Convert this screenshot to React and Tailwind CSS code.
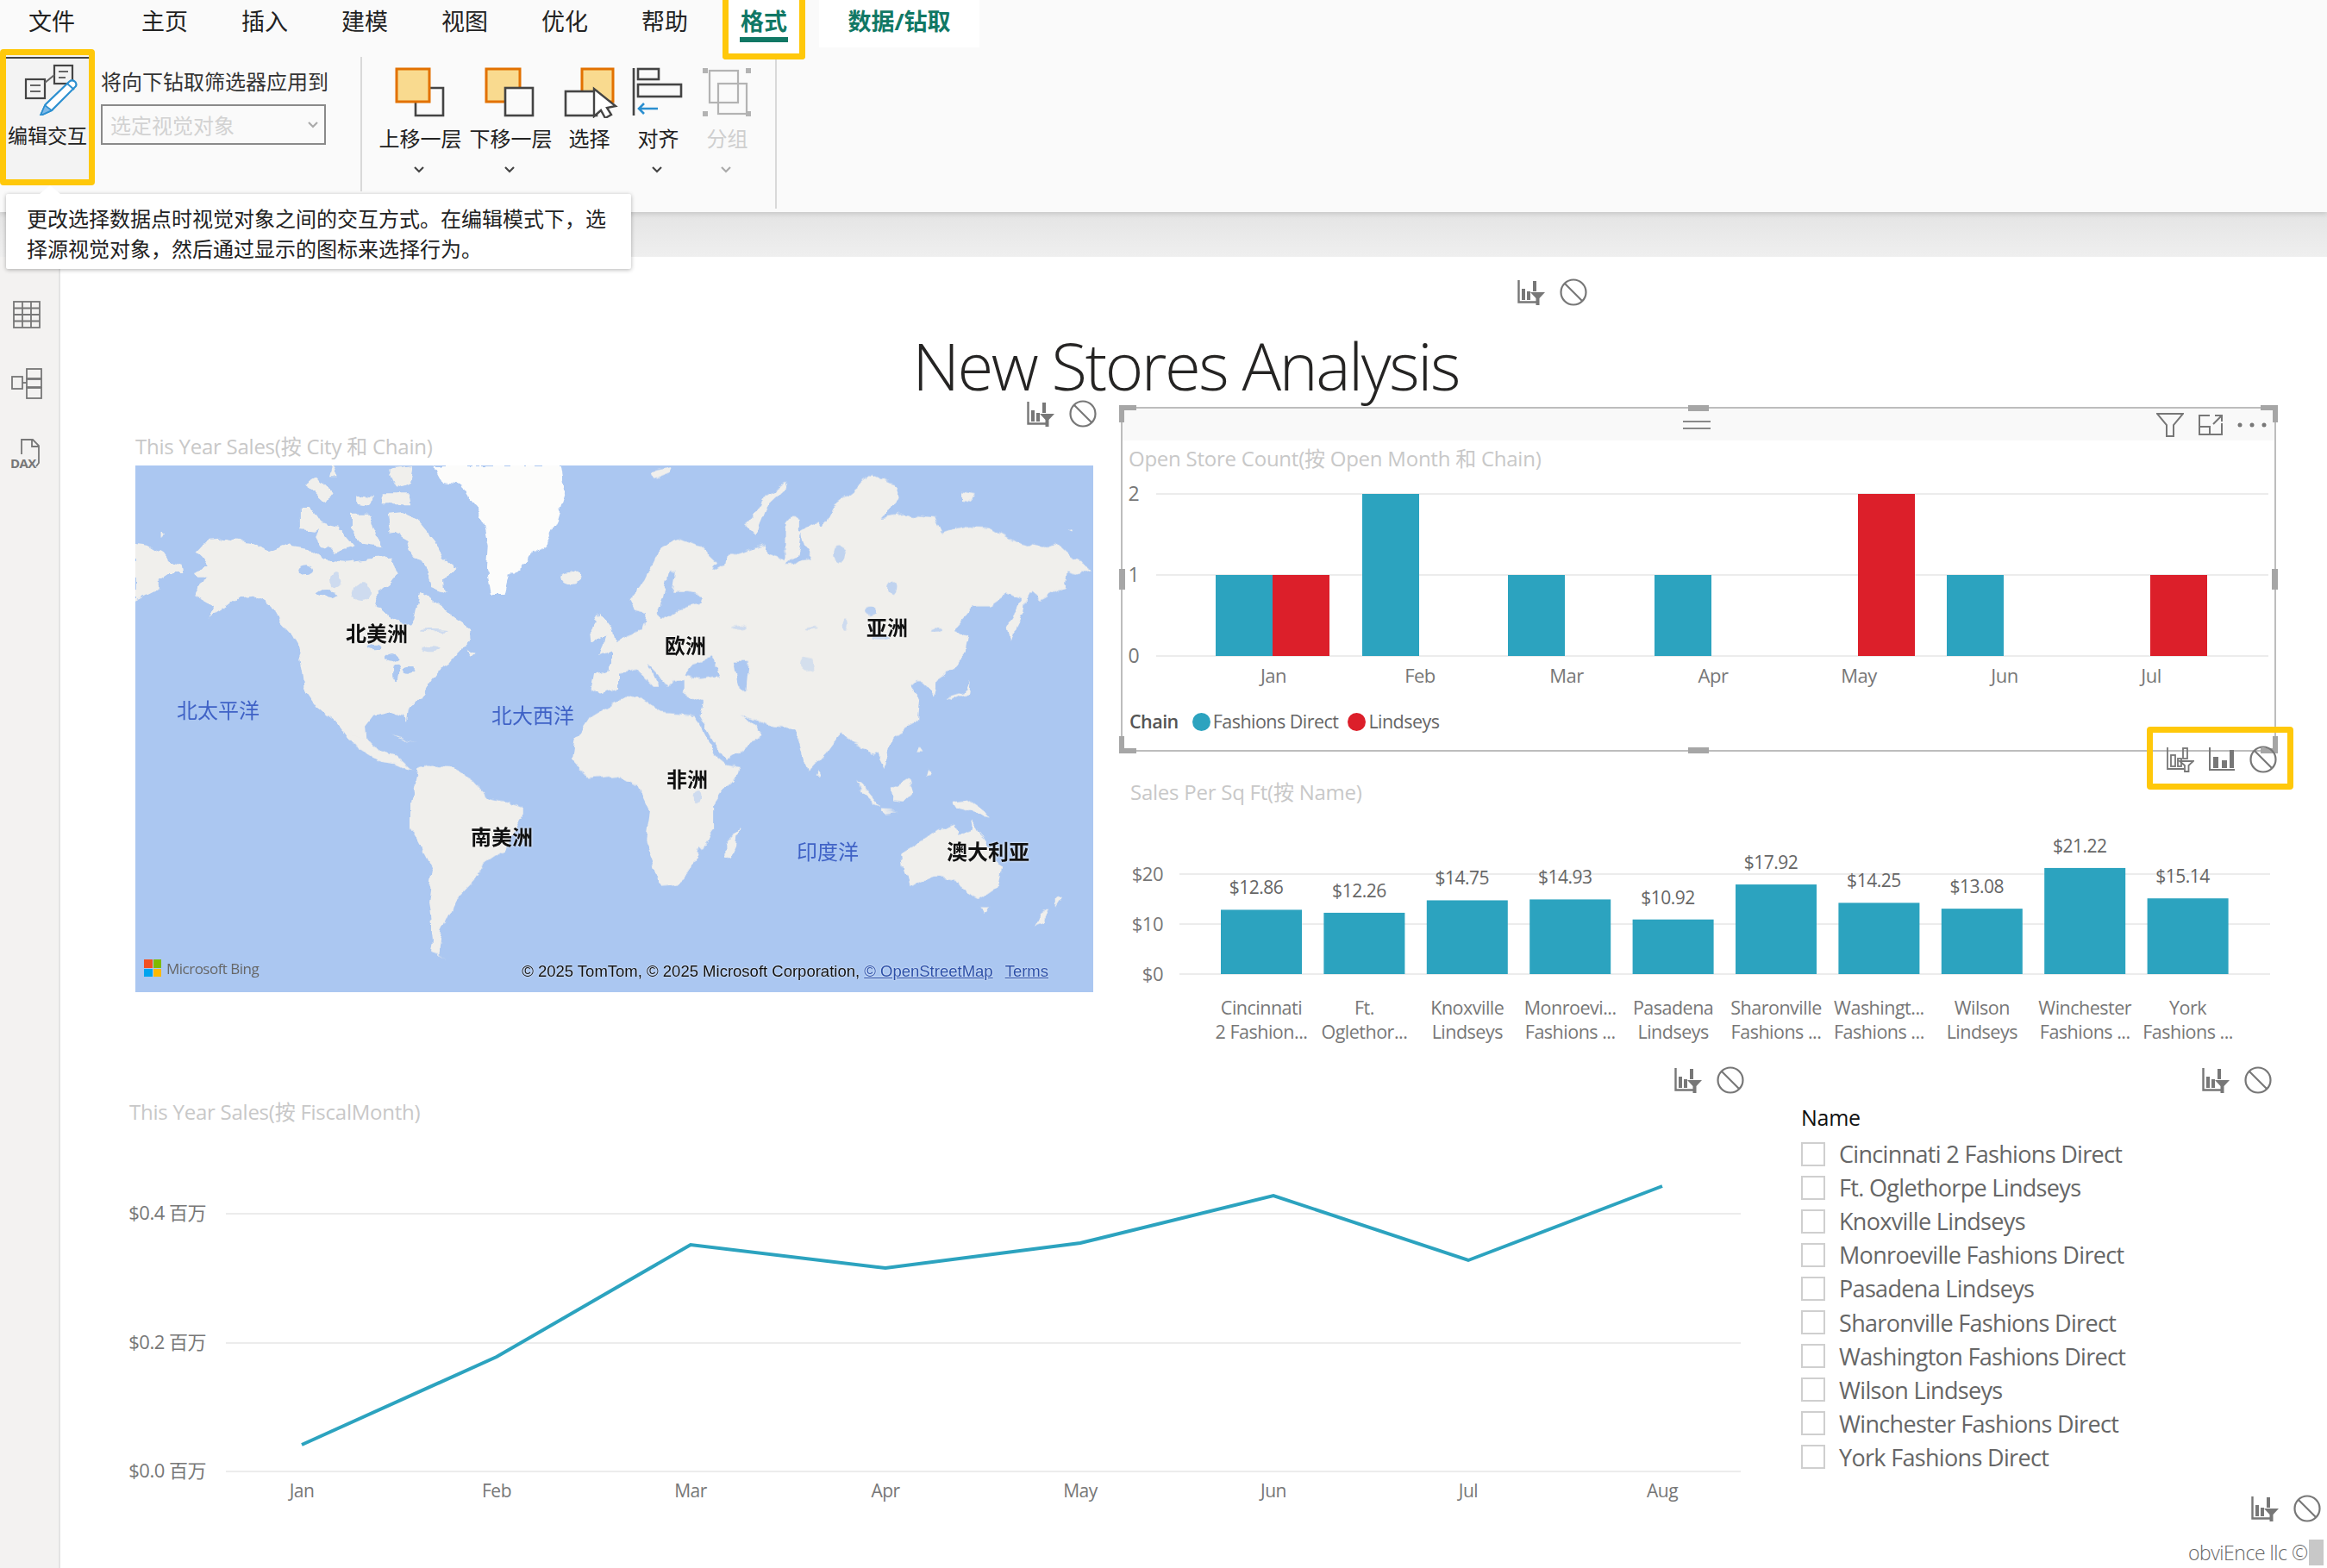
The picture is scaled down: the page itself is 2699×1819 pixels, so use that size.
import React from "react";

const Chart = ({ cls = "" }) => (
  <svg width="32" height="30" viewBox="0 0 32 30" className={cls}>
    <path d="M1.5 1V26.5H24" fill="none" stroke="#777" strokeWidth="2.4" />
    <rect x="5" y="11" width="4" height="13" fill="#777" />
    <rect x="11" y="14" width="4" height="10" fill="#777" />
    <rect x="18" y="2" width="4" height="12" fill="#777" />
    <path d="M15 15H32L25.5 22V30H21.5V22Z" fill="#777" />
  </svg>
);
const Ban = () => (
  <svg width="32" height="32" viewBox="0 0 32 32">
    <circle cx="16" cy="16" r="14.5" fill="none" stroke="#777" strokeWidth="2.2" />
    <path d="M6 6L26 26" stroke="#777" strokeWidth="2.2" />
  </svg>
);
const Pair = () => (
  <div className="flex h-[32px] items-center gap-[17px]">
    <Chart />
    <Ban />
  </div>
);

const Tab = ({ children }) => (
  <div className="flex h-[50px] w-[116px] items-center justify-center text-[27px] text-[#222]">{children}</div>
);

const Chev = ({ c = "#444" }) => (
  <svg width="14" height="10" viewBox="0 0 14 10">
    <path d="M2 2L7 7L12 2" fill="none" stroke={c} strokeWidth="2.2" />
  </svg>
);

const RibbonBtn = ({ w, label, vb, chev = true, dim, children }) => (
  <div className={`flex ${w} flex-col items-center pt-[20px]`}>
    <svg className="w-full" height="60" viewBox={vb}>{children}</svg>
    <div className={`mt-[9px] h-[30px] whitespace-nowrap text-[24px] leading-[30px] ${dim ? "text-[#cfcfcf]" : "text-[#222]"}`}>{label}</div>
    <div className="mr-[4px] mt-[16px] flex h-[10px] items-center">{chev && <Chev c={dim ? "#aaa" : "#444"} />}</div>
  </div>
);

const MapLabel = ({ x, y, sea, children }) => (
  <div
    style={{ left: x, top: y }}
    className={`absolute -translate-x-1/2 -translate-y-1/2 whitespace-nowrap text-[24px] leading-none ${
      sea ? "text-[#3f62c6]" : "font-bold text-[#111] [text-shadow:0_0_3px_#fff]"
    }`}
  >
    {children}
  </div>
);

const LAND = "#f0efec";
const SEA = "#abc7f1";

/* coordinates of the three map regions, each in its own local grid */
const north = [
  "0,270 40,275 95,310 115,340 150,350 155,375 110,375 75,400 75,430 0,470",
  "200,300 235,260 300,255 370,270 440,300 500,275 560,285 610,325 680,335 760,325 830,320 850,380 830,410 790,440 780,490 830,530 890,560 905,540 915,490 925,440 965,470 1040,530 1090,570 1090,610 1060,640 1020,690 980,715 950,760 930,800 890,850 885,890 870,870 830,855 770,870 745,905 750,965 700,965 650,890 590,840 545,770 530,680 540,650 510,590 450,520 440,490 380,455 335,460 300,490 240,530 255,490 190,450 205,420 240,395 200,395 185,370 240,350 220,320",
  "540,150 580,150 610,200 575,230 540,225",
  "600,200 660,215 710,280 650,300 600,280 580,240",
  "820,170 870,165 925,200 975,265 1000,320 1040,350 1005,400 1010,440 960,420 945,370 900,300 880,260 830,230",
  "700,170 760,170 780,240 800,280 740,270 700,220",
  "830,10 900,0 890,60 850,80 830,40",
  "800,100 890,100 895,130 800,130",
  "550,70 590,40 640,100 620,130 580,90",
  "640,0 660,40 630,40",
  "720,100 770,110 760,140 720,135",
  "1080,640 1105,650 1090,665",
  "1510,510 1545,560 1560,640 1510,660 1530,590 1480,620 1475,570",
  "1490,725 1568,705 1568,780 1510,800 1480,780",
  "80,225 100,235 80,245",
];
const greenland = "970,0 1380,0 1395,100 1370,190 1330,280 1270,330 1215,380 1200,450 1160,450 1145,360 1150,280 1135,200 1100,140 1060,70 1000,60";
const northLakes = [
  [555, 365, 28, 16, 1], [620, 445, 30, 13, 1], [650, 400, 20, 24, 0.5], [735, 440, 30, 25, 0.5],
  [830, 670, 22, 16, 1], [850, 720, 10, 28, 1], [890, 710, 20, 12, 1], [780, 630, 25, 10, 1], [970, 575, 45, 5, 0.5], [960, 640, 30, 9, 0.5],
];

const eurasia =
  "0,640 40,600 100,570 115,510 75,500 60,470 110,400 160,290 220,255 290,285 345,340 330,370 370,345 375,310 400,310 430,300 500,270 510,310 570,330 570,200 590,175 610,190 610,230 680,190 690,210 730,130 850,30 870,40 935,70 930,120 880,180 950,170 1050,180 1075,235 1170,210 1230,215 1320,270 1400,290 1450,270 1500,320 1560,360 1510,380 1480,370 1475,425 1400,470 1365,440 1350,470 1290,445 1230,490 1180,490 1130,550 1120,570 1160,590 1150,650 1100,720 1060,750 1050,810 1040,790 1000,750 980,770 1005,820 1000,880 988,900 913,950 905,980 892,1050 870,1000 851,1010 830,985 789,970 748,930 700,1000 638,1070 611,960 597,915 501,905 430,870 490,930 494,945 378,1025 330,950 290,870 300,820 240,790 240,750 195,755 190,770 165,740 130,700 115,685 165,770 140,770 85,710 0,730";
const eastLand = [
  "440,210 500,110 570,60 575,75 510,140 470,245",
  "130,20 200,5 190,30 140,50",
  "1290,560 1320,510 1355,430 1345,510 1300,610",
  "1090,810 1150,790 1170,750 1165,790 1110,815",
  "1140,90 1190,100 1170,125 1140,120",
  "1480,235 1500,230 1495,240",
];
const eastSea = [
  "245,730 270,690 330,670 355,735 290,745",
  "400,680 450,680 440,790 415,770",
  "190,370 215,370 205,440 260,440 300,450 290,480 220,500 170,540 150,520 170,470",
  "615,230 630,290 655,325 620,330 600,345 575,345 600,320 610,280",
];
const eastLakes = [
  [915, 425, 13, 28, 0.7], [745, 310, 22, 30, 0.7], [840, 505, 25, 14, 0.8], [880, 600, 28, 10, 0.7],
  [640, 690, 24, 26, 0.4], [420, 560, 22, 8, 0.5], [1060, 570, 18, 8, 0.7], [765, 555, 10, 20, 0.5], [650, 565, 24, 4, 0.5],
];

const south = [
  "341,60 380,-30 443,-85 490,-100 548,-40 625,-30 675,110 700,140 735,150 690,235 670,280 670,370 640,430 620,510 580,555 545,560 525,480 505,400 515,300 490,220 440,180 375,190 335,125",
  "730,365 725,420 710,470 695,460 695,420",
  "0,145 50,150 100,195 140,260 220,290 220,320 170,440 130,480 105,540 60,610 25,720 15,800 35,820 0,790 4,750 -6,618 4,504 -47,360 -47,276 -30,162",
  "1005,195 1030,230 1065,290 1050,280 1020,240",
  "1065,295 1105,300 1070,305",
  "1090,225 1130,190 1140,240 1120,270 1095,265",
  "1175,165 1185,185 1170,190",
  "1155,80 1165,100 1150,100",
  "1240,265 1270,260 1310,300 1325,325 1280,310 1250,290",
  "1115,450 1170,400 1200,370 1240,350 1250,385 1280,370 1285,340 1310,410 1350,500 1340,570 1300,610 1270,590 1245,540 1200,530 1130,570 1120,510",
  "1295,640 1320,640 1310,665",
  "1480,600 1495,600 1480,635",
  "1465,645 1450,690 1430,700 1440,670",
  "915,165 920,185 908,185",
];

const storeBars = [
  [1410, 667, "#2ca3bf"], [1476, 667, "#dc1f2a"], [1580, 573, "#2ca3bf"], [1749, 667, "#2ca3bf"],
  [1919, 667, "#2ca3bf"], [2155, 573, "#dc1f2a"], [2258, 667, "#2ca3bf"], [2494, 667, "#dc1f2a"],
];
const storeMonths = [["Jan", 1477], ["Feb", 1647], ["Mar", 1817], ["Apr", 1987], ["May", 2156], ["Jun", 2325], ["Jul", 2495]];

const sales = [
  [12.86, "Cincinnati", "2 Fashion..."], [12.26, "Ft.", "Oglethor..."], [14.75, "Knoxville", "Lindseys"],
  [14.93, "Monroevi...", "Fashions ..."], [10.92, "Pasadena", "Lindseys"], [17.92, "Sharonville", "Fashions ..."],
  [14.25, "Washingt...", "Fashions ..."], [13.08, "Wilson", "Lindseys"], [21.22, "Winchester", "Fashions ..."],
  [15.14, "York", "Fashions ..."],
];

const linePts = "350,1674 576,1572 801,1442 1027,1469 1253,1440 1477,1385 1703,1460 1928,1374";
const lineMonths = [["Jan", 350], ["Feb", 576], ["Mar", 801], ["Apr", 1027], ["May", 1253], ["Jun", 1477], ["Jul", 1703], ["Aug", 1928]];
const names = [
  "Cincinnati 2 Fashions Direct", "Ft. Oglethorpe Lindseys", "Knoxville Lindseys", "Monroeville Fashions Direct",
  "Pasadena Lindseys", "Sharonville Fashions Direct", "Washington Fashions Direct", "Wilson Lindseys",
  "Winchester Fashions Direct", "York Fashions Direct",
];

const Handle = ({ cls }) => <div className={`absolute bg-[#a6a6a6] ${cls}`} />;

export default function App() {
  return (
    <div className="relative flex h-[1819px] w-[2699px] flex-col overflow-hidden bg-white [font-family:'Open_Sans','Noto_Sans_CJK_SC',sans-serif]">
      {/* tabs */}
      <div className="relative z-20 flex h-[57px] bg-[#fafafa] pl-[33px]">
        <div className="flex h-[50px] w-[100px] items-center text-[27px] text-[#222]">文件</div>
        <Tab>主页</Tab>
        <Tab>插入</Tab>
        <Tab>建模</Tab>
        <Tab>视图</Tab>
        <Tab>优化</Tab>
        <Tab>帮助</Tab>
        <div className="ml-[9px] box-border flex h-[69px] w-[96px] shrink-0 flex-col items-center rounded-b-[4px] border-[7px] border-t-0 border-[#ffc80a] bg-white pt-[7px]">
          <div className="flex h-[36px] items-center text-[27px] font-bold text-[#117865]">格式</div>
          <div className="h-[6px] w-[56px] bg-[#117865]" />
        </div>
        <div className="ml-[16px] flex h-[55px] w-[186px] items-center justify-center bg-white pb-[5px] text-[27px] font-bold text-[#117865]">数据/钻取</div>
      </div>

      {/* ribbon */}
      <div className="relative z-10 flex h-[189px] shrink-0 items-start bg-[#fafafa] shadow-[0_2px_6px_rgba(0,0,0,0.14)]">
        <div className="box-border flex h-[158px] w-[110px] shrink-0 flex-col items-center rounded-[4px] border-[7px] border-[#ffc80a] bg-[#f3f3f3]">
          <div className="mt-[2px] h-[2px] w-full bg-[#444]" />
          <svg width="96" height="66" viewBox="7 67 96 66">
            <rect x="30" y="91" width="22" height="22" fill="#f3f3f3" stroke="#444" strokeWidth="2.2" />
            <rect x="63" y="75" width="21" height="21" fill="#f3f3f3" stroke="#444" strokeWidth="2.2" />
            <path d="M52 95L63 86M35 98H47M35 105H47M68 82H79M68 89H76" stroke="#666" strokeWidth="2" fill="none" />
            <path d="M47 133L53 120L80 94C84 90 90 94 88 99L60 127Z" fill="#fff" stroke="#2b8fd0" strokeWidth="2.2" />
            <path d="M47 133L52 121L60 127Z" fill="#7db9e8" stroke="#2b8fd0" strokeWidth="1.6" />
            <path d="M78 96L86 103" stroke="#2b8fd0" strokeWidth="2" />
          </svg>
          <div className="mt-[8px] whitespace-nowrap text-[23px] leading-[30px] text-[#222]">编辑交互</div>
        </div>

        <div className="ml-[7px] flex w-[261px] shrink-0 flex-col pt-[23px]">
          <div className="h-[30px] whitespace-nowrap text-[24px] leading-[30px] text-[#333]">将向下钻取筛选器应用到</div>
          <div className="mt-[11px] box-border flex h-[47px] items-center justify-between border-2 border-[#8a8a8a] pl-[9px] pr-[6px]">
            <span className="pt-[2px] text-[24px] text-[#d2d2d2]">选定视觉对象</span>
            <Chev c="#aaa" />
          </div>
        </div>

        <div className="ml-[40px] mt-[9px] h-[156px] w-[2px] shrink-0 bg-[#d9d9d9]" />

        <div className="ml-[15px] flex">
          <RibbonBtn w="w-[105px]" label="上移一层" vb="435 77 105 60">
            <path d="M499 102H514V134H482V119" fill="none" stroke="#444" strokeWidth="2.6" />
            <rect x="460" y="80" width="38" height="38" fill="#f9da8f" stroke="#e27100" strokeWidth="3" />
          </RibbonBtn>
          <RibbonBtn w="w-[105px]" label="下移一层" vb="540 77 105 60">
            <rect x="564" y="80" width="39" height="38" fill="#f9da8f" stroke="#e27100" strokeWidth="3" />
            <rect x="586" y="102" width="32" height="32" fill="#fafafa" stroke="#444" strokeWidth="2.6" />
          </RibbonBtn>
          <RibbonBtn w="w-[77px]" label="选择" chev={false} vb="645 77 77 60">
            <rect x="675" y="80" width="36" height="38" fill="#f9da8f" stroke="#e27100" strokeWidth="3" />
            <rect x="656" y="106" width="36" height="28" fill="#fafafa" stroke="#444" strokeWidth="2.6" />
            <path d="M689 103V135L697 128L702 137L709 133L704 125L714 123Z" fill="#fff" stroke="#444" strokeWidth="2.4" />
          </RibbonBtn>
          <RibbonBtn w="w-[83px]" label="对齐" vb="722 77 83 60">
            <path d="M735 79V134" stroke="#444" strokeWidth="2.6" />
            <rect x="740" y="80" width="24" height="12" fill="none" stroke="#444" strokeWidth="2.6" />
            <rect x="740" y="98" width="50" height="14" fill="none" stroke="#444" strokeWidth="2.6" />
            <path d="M763 126H741M747 120L741 126L747 132" fill="none" stroke="#2b8fd0" strokeWidth="2.6" />
          </RibbonBtn>
          <RibbonBtn w="w-[77px]" label="分组" dim vb="805 77 77 60">
            <rect x="823" y="82" width="33" height="37" fill="none" stroke="#b3b3b3" strokeWidth="2.2" />
            <rect x="833" y="97" width="33" height="35" fill="none" stroke="#b3b3b3" strokeWidth="2.2" />
            <path d="M815 79h6v6h-6zM865 79h6v6h-6zM815 129h6v6h-6zM865 129h6v6h-6z" fill="#b3b3b3" />
          </RibbonBtn>
        </div>

        <div className="ml-[17px] mt-[9px] h-[176px] w-[2px] shrink-0 bg-[#d9d9d9]" />
      </div>

      {/* grey band */}
      <div className="h-[52px] shrink-0 bg-gradient-to-b from-[#e4e4e4] to-[#efefef]" />

      {/* tooltip */}
      <div className="absolute left-[7px] top-[225px] z-30 box-border h-[87px] w-[725px] rounded-[2px] bg-white px-[24px] py-[11px] text-[24px] leading-[35px] text-[#222] shadow-[0_1px_5px_rgba(0,0,0,0.3)]">
        <div className="absolute left-[39px] top-[-10px] h-0 w-0 border-x-[12px] border-b-[10px] border-x-transparent border-b-white" />
        {"更改选择数据点时视觉对象之间的交互方式。在编辑模式下\uFF0C选择源视觉对象\uFF0C然后通过显示的图标来选择行为。"}
      </div>

      {/* body */}
      <div className="flex min-h-0 flex-1">
        <aside className="box-border flex w-[70px] shrink-0 flex-col items-center gap-[46px] border-r-2 border-[#e4e4e4] bg-[#f3f2f1] pr-[6px] pt-[51px]">
          <svg width="32" height="32" viewBox="0 0 32 32" fill="none" stroke="#777" strokeWidth="1.8">
            <rect x="1" y="1" width="30" height="30" />
            <path d="M1 8.5H31M1 16H31M1 23.5H31M11 1V31M21 1V31" />
          </svg>
          <svg width="36" height="36" viewBox="0 0 36 36" fill="none" stroke="#777" strokeWidth="1.8">
            <rect x="1" y="10" width="12" height="14" />
            <rect x="18" y="1" width="17" height="11" />
            <rect x="18" y="13" width="17" height="9" />
            <rect x="18" y="23" width="17" height="12" />
            <path d="M13 17H18" />
          </svg>
          <div className="relative h-[36px] w-[36px]">
            <svg width="36" height="36" viewBox="0 0 36 36" fill="none" stroke="#777" strokeWidth="1.8">
              <path d="M12 18V1H25L32 8V28L29 32M24 1V9H32" />
            </svg>
            <span className="absolute bottom-[0px] left-[-1px] text-[15px] font-bold leading-none tracking-[-0.04em] text-[#777]">DAX</span>
          </div>
        </aside>

        <main className="flex min-w-0 flex-1 flex-col">
          {/* title */}
          <div className="h-[166px] shrink-0">
            <div className="pl-[1690px] pt-[25px]"><Pair /></div>
            <div className="mt-[29px] pr-[19px] text-center text-[76px] font-light leading-[80px] tracking-[-0.032em] text-[#252423]">New Stores Analysis</div>
          </div>

          {/* middle */}
          <div className="flex h-[770px] shrink-0">
            <div className="box-border w-[1230px] shrink-0 pl-[87px] pr-[28px]">
              <div className="flex justify-end"><Pair /></div>
              <div className="flex h-[44px] items-center text-[24px] tracking-[-0.01em] text-[#c8c8c8]">This Year Sales(按 City 和 Chain)</div>
              <div className="relative h-[611px] w-[1111px] overflow-hidden bg-[#abc7f1]">
                <svg className="blur-[0.6px]" width="1111" height="611" viewBox="0 0 1111 611">
                  <defs>
                    <filter id="coast" filterUnits="userSpaceOnUse" x="0" y="0" width="1111" height="611">
                      <feTurbulence type="fractalNoise" baseFrequency="0.055" numOctaves="3" seed="4" result="n" />
                      <feDisplacementMap in="SourceGraphic" in2="n" scale="11" xChannelSelector="R" yChannelSelector="G" />
                    </filter>
                  </defs>
                  <g filter="url(#coast)">
                    {/* north america, greenland */}
                    <g transform="scale(0.35714,0.33333)">
                      <polygon points={greenland} fill="#fcfcfb" />
                      <ellipse cx="1410" cy="388" rx="32" ry="22" fill={LAND} />
                      {north.map((p, i) => <polygon key={i} points={p} fill={LAND} />)}
                      {northLakes.map(([x, y, rx, ry, o], i) => <ellipse key={i} cx={x} cy={y} rx={rx} ry={ry} fill={SEA} opacity={o} />)}
                    </g>
                    {/* central america */}
                    <g transform="scale(0.829,0.542) translate(-189,-406)" fill={LAND}>
                      <polygon points="490,990 512,990 530,1020 555,1030 578,1062 555,1045 530,1040 500,1010" />
                      <polygon points="545,985 585,998 560,992" />
                    </g>
                    {/* eurasia */}
                    <g transform="translate(551,0) scale(0.35714,0.33333)">
                      <polygon points={eurasia} fill={LAND} />
                      {eastLand.map((p, i) => <polygon key={i} points={p} fill={LAND} />)}
                      {eastSea.map((p, i) => <polygon key={i} points={p} fill={SEA} />)}
                      {eastLakes.map(([x, y, rx, ry, o], i) => <ellipse key={i} cx={x} cy={y} rx={rx} ry={ry} fill={SEA} opacity={o} />)}
                    </g>
                    {/* southern land */}
                    <g transform="translate(343,300) scale(0.4897,0.33333)">
                      {south.map((p, i) => <polygon key={i} points={p} fill={LAND} />)}
                      <ellipse cx="630" cy="250" rx="12" ry="20" fill={SEA} opacity="0.5" />
                    </g>
                  </g>
                </svg>
                <MapLabel x={280} y={195}>北美洲</MapLabel>
                <MapLabel x={872} y={188}>亚洲</MapLabel>
                <MapLabel x={638} y={209}>欧洲</MapLabel>
                <MapLabel x={640} y={364}>非洲</MapLabel>
                <MapLabel x={425} y={431}>南美洲</MapLabel>
                <MapLabel x={989} y={448}>澳大利亚</MapLabel>
                <MapLabel x={96} y={284} sea>北太平洋</MapLabel>
                <MapLabel x={461} y={290} sea>北大西洋</MapLabel>
                <MapLabel x={803} y={448} sea>印度洋</MapLabel>
                <div className="absolute bottom-[18px] left-[10px] flex items-center gap-[6px]">
                  <div className="grid h-[20px] w-[20px] grid-cols-2 gap-px">
                    <i className="bg-[#f25022]" /><i className="bg-[#7fba00]" /><i className="bg-[#00a4ef]" /><i className="bg-[#ffb900]" />
                  </div>
                  <span className="text-[17px] leading-none tracking-[-0.03em] text-[#666]">Microsoft Bing</span>
                </div>
                <div className="absolute bottom-[15px] right-[52px] whitespace-nowrap text-[18.5px] leading-none text-[#111] [font-family:'Liberation_Sans',sans-serif] [text-shadow:0_0_2px_#fff]">
                  © 2025 TomTom, © 2025 Microsoft Corporation, <span className="text-[#2b4fa8] underline">© OpenStreetMap</span>
                  <span className="ml-[14px] text-[#2b4fa8] underline">Terms</span>
                </div>
              </div>
            </div>

            <div className="w-[1340px] shrink-0 pt-[8px]">
              {/* selected visual */}
              <div className="relative box-border h-[400px] border-2 border-[#bdbdbd]">
                <div className="flex h-[37px] items-center bg-[#f9f9f9] pr-[9px]">
                  <div className="flex-1" />
                  <svg className="ml-[5px]" width="32" height="12" viewBox="0 0 32 12"><path d="M0 2H32M0 10H32" stroke="#888" strokeWidth="2" /></svg>
                  <div className="flex flex-1 items-center justify-end gap-[17px]">
                    <svg width="32" height="28" viewBox="0 0 32 28" fill="none" stroke="#777" strokeWidth="2"><path d="M1 1H31L20 14V27H12V14Z" /></svg>
                    <svg width="28" height="24" viewBox="0 0 28 24" fill="none" stroke="#777" strokeWidth="2"><path d="M13 1H1V23H27V10M1 14H13V23M17 11L27 1M19 1H27V8" /></svg>
                    <svg width="34" height="6" viewBox="0 0 34 6" fill="#777"><circle cx="3" cy="3" r="2.5" /><circle cx="17" cy="3" r="2.5" /><circle cx="31" cy="3" r="2.5" /></svg>
                  </div>
                </div>
                <div className="flex h-[42px] items-center whitespace-nowrap pl-[7px] text-[24px] tracking-[-0.01em] text-[#c8c8c8]">Open Store Count(按 Open Month 和 Chain)</div>
                <svg className="block" width="1336" height="264" viewBox="1302 553 1336 264">
                  {[573, 667, 761].map((y, i) => (
                    <g key={y}>
                      <line x1="1341" x2="2631" y1={y} y2={y} stroke="#ececec" strokeWidth="2" />
                      <text x="1315" y={y + 8} textAnchor="middle" fontSize="23" fill="#777">{2 - i}</text>
                    </g>
                  ))}
                  {storeBars.map(([x, y, c], i) => <rect key={i} x={x} y={y} width="66" height={761 - y} fill={c} />)}
                  {storeMonths.map(([m, x]) => <text key={m} x={x} y="792" textAnchor="middle" fontSize="22" letterSpacing="-0.5" fill="#777">{m}</text>)}
                </svg>
                <div className="flex h-[40px] items-center pl-[8px] text-[21.5px] tracking-[-0.025em] text-[#666]">
                  <span className="font-semibold text-[#555]">Chain</span>
                  <span className="ml-[16px] h-[21px] w-[21px] rounded-full bg-[#2ca3bf]" />
                  <span className="ml-[3px]">Fashions Direct</span>
                  <span className="ml-[11px] h-[21px] w-[21px] rounded-full bg-[#dc1f2a]" />
                  <span className="ml-[3px]">Lindseys</span>
                </div>

                <Handle cls="left-[-4px] top-[-4px] h-[6px] w-[20px]" />
                <Handle cls="left-[-4px] top-[-4px] h-[20px] w-[6px]" />
                <Handle cls="right-[-4px] top-[-4px] h-[6px] w-[20px]" />
                <Handle cls="right-[-4px] top-[-4px] h-[20px] w-[6px]" />
                <Handle cls="bottom-[-4px] left-[-4px] h-[6px] w-[20px]" />
                <Handle cls="bottom-[-4px] left-[-4px] h-[20px] w-[6px]" />
                <Handle cls="bottom-[-4px] right-[-4px] h-[6px] w-[20px]" />
                <Handle cls="bottom-[-4px] right-[-4px] h-[20px] w-[6px]" />
                <Handle cls="left-[656px] top-[-4px] h-[7px] w-[24px]" />
                <Handle cls="bottom-[-4px] left-[656px] h-[7px] w-[24px]" />
                <Handle cls="left-[-4px] top-[186px] h-[24px] w-[7px]" />
                <Handle cls="right-[-4px] top-[186px] h-[24px] w-[7px]" />

                <div className="absolute left-[1188px] top-[369px] box-border flex h-[73px] w-[170px] items-center gap-[17px] rounded-[4px] border-[7px] border-[#ffc80a] pl-[16px] pt-[3px]">
                  <svg width="32" height="30" viewBox="0 0 32 30" fill="none" stroke="#777" strokeWidth="1.8">
                    <path d="M1 1V26H20" />
                    <rect x="5" y="10" width="5" height="13" />
                    <rect x="13" y="14" width="4" height="9" />
                    <rect x="19" y="2" width="5" height="12" />
                    <path d="M15 17H31L25.5 22V29H21V22Z" />
                  </svg>
                  <svg width="30" height="28" viewBox="0 0 30 28">
                    <path d="M1 0V26H30" fill="none" stroke="#777" strokeWidth="2" />
                    <path d="M5 11h6v13H5zM15 15h6v9h-6zM24 3h5v21h-5z" fill="#777" />
                  </svg>
                  <Ban />
                </div>
              </div>

              {/* sales */}
              <div className="mt-[26px] flex h-[42px] items-center pl-[11px] text-[24px] tracking-[-0.01em] text-[#c8c8c8]">Sales Per Sq Ft(按 Name)</div>
              <svg className="block" width="1340" height="294" viewBox="1300 940 1340 294">
                {[[1014, "$20"], [1072, "$10"], [1130, "$0"]].map(([y, t]) => (
                  <g key={y}>
                    <line x1="1368" x2="2633" y1={y} y2={y} stroke="#ececec" strokeWidth="2" />
                    <text x="1349" y={y + 8} textAnchor="end" fontSize="22" letterSpacing="-0.5" fill="#777">{t}</text>
                  </g>
                ))}
                {sales.map(([v, a, b], i) => {
                  const x = 1416 + i * 119.4;
                  const top = 1130 - v * 5.8;
                  return (
                    <g key={a}>
                      <rect x={x} y={top} width="94" height={1130 - top} fill="#2ca3bf" />
                      <text x={x + 41} y={top - 18} textAnchor="middle" fontSize="21" letterSpacing="-0.5" fill="#666">${v.toFixed(2)}</text>
                      <text x={x + 47} y="1177" textAnchor="middle" fontSize="21.5" letterSpacing="-0.5" fill="#777">{a}</text>
                      <text x={x + 47} y="1205" textAnchor="middle" fontSize="21.5" letterSpacing="-0.5" fill="#777">{b}</text>
                    </g>
                  );
                })}
              </svg>
            </div>
          </div>

          {/* bottom */}
          <div className="flex min-h-0 flex-1">
            <div className="box-border w-[1954px] shrink-0 pl-[80px] pr-[1px]">
              <div className="flex h-[34px] items-center justify-end pt-[3px]"><Pair /></div>
              <div className="flex h-[44px] items-center text-[24px] tracking-[-0.01em] text-[#c8c8c8]">This Year Sales(按 FiscalMonth)</div>
              <svg className="block" width="1874" height="448" viewBox="150 1310 1874 448">
                {[[1406, "$0.4 百万"], [1556, "$0.2 百万"], [1705, "$0.0 百万"]].map(([y, t]) => (
                  <g key={y}>
                    <line x1="262" x2="2019" y1={y} y2={y} stroke="#ececec" strokeWidth="2" />
                    <text x="239" y={y + 7} textAnchor="end" fontSize="22" letterSpacing="-0.5" fill="#777">{t}</text>
                  </g>
                ))}
                <polyline points={linePts} fill="none" stroke="#2ca3bf" strokeWidth="4" />
                {lineMonths.map(([m, x]) => <text key={m} x={x} y="1735" textAnchor="middle" fontSize="21" letterSpacing="-0.5" fill="#777">{m}</text>)}
              </svg>
            </div>

            <div className="ml-[65px] w-[610px] shrink-0">
              <div className="flex h-[34px] items-center pl-[465px] pt-[3px]"><Pair /></div>
              <div className="mt-[9px] flex h-[40px] items-center text-[25px] tracking-[-0.01em] text-[#111]">Name</div>
              <div className="mt-[2px] flex flex-col">
                {names.map((n) => (
                  <div key={n} className="flex h-[39.1px] items-center">
                    <span className="box-border h-[28px] w-[28px] shrink-0 border-2 border-[#cfcfcf]" />
                    <span className="ml-[16px] text-[27px] leading-none tracking-[-0.025em] text-[#666]">{n}</span>
                  </div>
                ))}
              </div>
              <div className="mt-[24px] pl-[522px]"><Pair /></div>
              <div className="mt-[16px] flex h-[34px] items-end pl-[449px]">
                <span className="whitespace-nowrap text-[23px] font-light leading-[30px] tracking-[-0.02em] text-[#666]">obviEnce llc ©</span>
                <span className="ml-[1px] h-[30px] w-[17px] bg-[#c8c8c8]" />
              </div>
            </div>
          </div>
        </main>
      </div>
    </div>
  );
}
